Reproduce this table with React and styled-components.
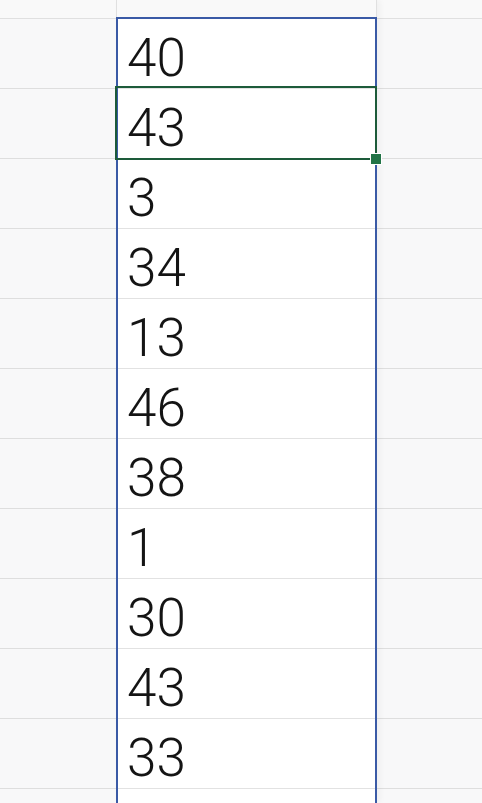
import styled, { createGlobalStyle } from 'styled-components';

const values = [40, 43, 3, 34, 13, 46, 38, 1, 30, 43, 33, ''];
const SELECTED = 1;

const GlobalStyle = createGlobalStyle`
  html, body {
    margin: 0;
    padding: 0;
    background: #ffffff;
    overflow: hidden;
  }
`;

export default function App() {
  return (
    <>
      <GlobalStyle />
      <Sheet>
        <SideColumn $width="116px">
          <SideHeader />
          {values.map((_, i) => (
            <SideCell key={i} />
          ))}
        </SideColumn>

        <MainColumn>
          <MainHeader />
          <DataBox>
            {values.map((v, i) => (
              <DataCell key={i} $selected={i === SELECTED}>
                {v}
                {i === SELECTED && <FillHandle />}
              </DataCell>
            ))}
          </DataBox>
        </MainColumn>

        <SideColumn $width="auto" $grow>
          <SideHeader />
          {values.map((_, i) => (
            <SideCell key={i} />
          ))}
        </SideColumn>
      </Sheet>
    </>
  );
}

const Sheet = styled.div`
  display: flex;
  width: 482px;
  height: 803px;
  overflow: hidden;
`;

const SideColumn = styled.div`
  width: ${(p) => p.$width};
  flex: ${(p) => (p.$grow ? '1' : 'none')};
  display: flex;
  flex-direction: column;
  background: #f8f8f9;
`;

const SideHeader = styled.div`
  height: 19px;
  flex: none;
  box-sizing: border-box;
  border-bottom: 1px solid #e0e0e0;
  background: #f9f9f9;
`;

const SideCell = styled.div`
  height: 70px;
  flex: none;
  box-sizing: border-box;
  border-bottom: 1px solid #dedede;
`;

const MainColumn = styled.div`
  width: 261px;
  flex: none;
  display: flex;
  flex-direction: column;
  position: relative;
  z-index: 1;
  box-shadow: 3px 0 6px rgba(0, 0, 0, 0.04);
`;

const MainHeader = styled.div`
  height: 17px;
  flex: none;
  background: #f9f9f9;
  border-left: 1px solid #e0e0e0;
  border-right: 1px solid #e0e0e0;
`;

const DataBox = styled.div`
  display: flex;
  flex-direction: column;
  background: #ffffff;
  border: 2px solid #3a5aa6;
  border-bottom: none;
`;

const DataCell = styled.div`
  position: relative;
  height: 70px;
  flex: none;
  box-sizing: border-box;
  border-bottom: 1px solid #e2e2e2;
  padding: 8px 0 0 9px;
  display: flex;
  align-items: center;
  font-family: Roboto, 'Noto Sans', sans-serif;
  font-weight: 300;
  font-size: 53px;
  color: #141414;

  ${(p) =>
    p.$selected &&
    `
    &::after {
      content: '';
      position: absolute;
      left: -3px;
      right: -2px;
      top: -3px;
      bottom: -2px;
      border: 2px solid #1d5b3a;
      pointer-events: none;
    }
  `}
`;

const FillHandle = styled.span`
  position: absolute;
  right: -7px;
  bottom: -7px;
  width: 10px;
  height: 10px;
  background: #217346;
  border: 1px solid #ffffff;
  z-index: 2;
`;
